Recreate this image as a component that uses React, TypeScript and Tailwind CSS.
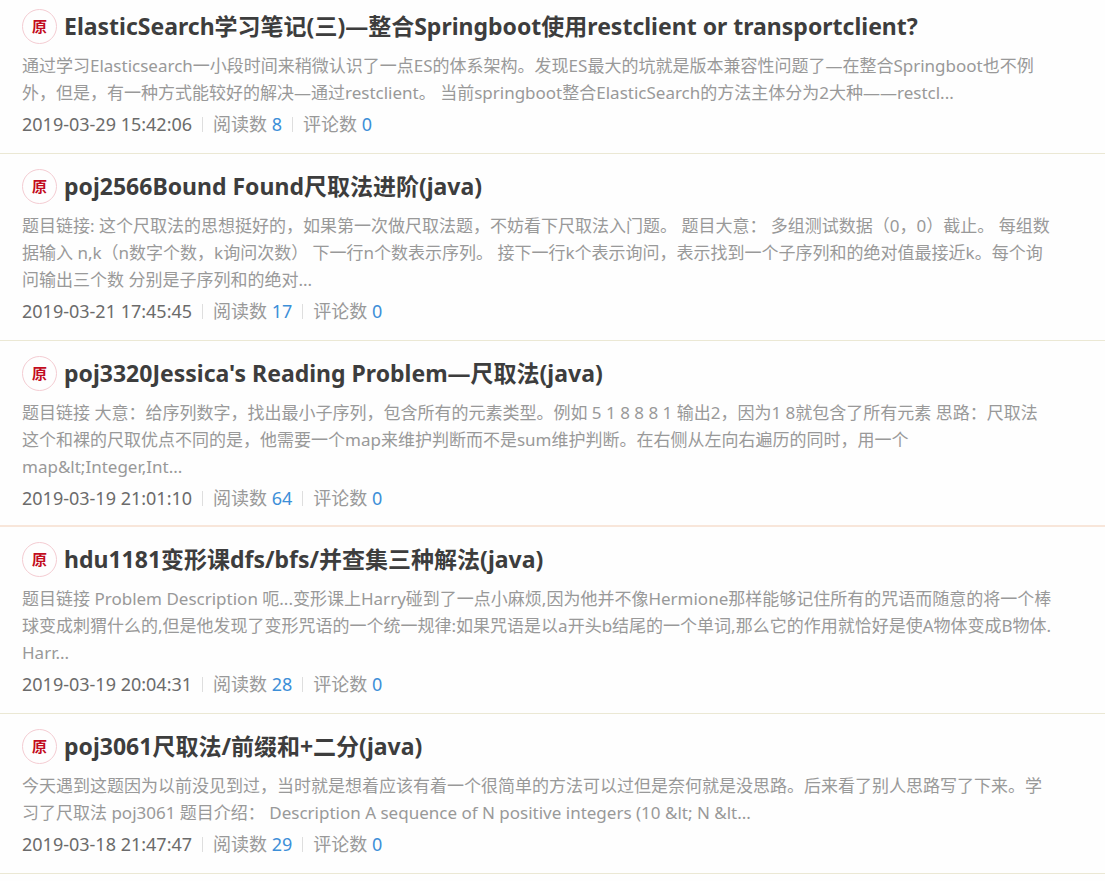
interface Article {
  id: string;
  title: string;
  summary: string;
  date: string;
  reads: number;
  comments: number;
  highlighted?: boolean;
}

const articles: Article[] = [
  {
    id: 'elasticsearch-3',
    title: 'ElasticSearch学习笔记(三)—整合Springboot使用restclient or transportclient?',
    summary:
      '通过学习Elasticsearch一小段时间来稍微认识了一点ES的体系架构。发现ES最大的坑就是版本兼容性问题了—在整合Springboot也不例\n外，但是，有一种方式能较好的解决—通过restclient。 当前springboot整合ElasticSearch的方法主体分为2大种——restcl...',
    date: '2019-03-29 15:42:06',
    reads: 8,
    comments: 0,
  },
  {
    id: 'poj2566',
    title: 'poj2566Bound Found尺取法进阶(java)',
    summary:
      '题目链接: 这个尺取法的思想挺好的，如果第一次做尺取法题，不妨看下尺取法入门题。 题目大意： 多组测试数据（0，0）截止。 每组数\n据输入 n,k（n数字个数，k询问次数） 下一行n个数表示序列。 接下一行k个表示询问，表示找到一个子序列和的绝对值最接近k。每个询\n问输出三个数 分别是子序列和的绝对...',
    date: '2019-03-21 17:45:45',
    reads: 17,
    comments: 0,
  },
  {
    id: 'poj3320',
    title: "poj3320Jessica's Reading Problem—尺取法(java)",
    summary:
      '题目链接 大意：给序列数字，找出最小子序列，包含所有的元素类型。例如 5 1 8 8 8 1 输出2，因为1 8就包含了所有元素 思路：尺取法\n这个和裸的尺取优点不同的是，他需要一个map来维护判断而不是sum维护判断。在右侧从左向右遍历的同时，用一个\nmap&lt;Integer,Int...',
    date: '2019-03-19 21:01:10',
    reads: 64,
    comments: 0,
    highlighted: true,
  },
  {
    id: 'hdu1181',
    title: 'hdu1181变形课dfs/bfs/并查集三种解法(java)',
    summary:
      '题目链接 Problem Description 呃...变形课上Harry碰到了一点小麻烦,因为他并不像Hermione那样能够记住所有的咒语而随意的将一个棒\n球变成刺猬什么的,但是他发现了变形咒语的一个统一规律:如果咒语是以a开头b结尾的一个单词,那么它的作用就恰好是使A物体变成B物体.\nHarr...',
    date: '2019-03-19 20:04:31',
    reads: 28,
    comments: 0,
  },
  {
    id: 'poj3061',
    title: 'poj3061尺取法/前缀和+二分(java)',
    summary:
      '今天遇到这题因为以前没见到过，当时就是想着应该有着一个很简单的方法可以过但是奈何就是没思路。后来看了别人思路写了下来。学\n习了尺取法 poj3061 题目介绍： Description A sequence of N positive integers (10 &lt; N &lt...',
    date: '2019-03-18 21:47:47',
    reads: 29,
    comments: 0,
  },
];

function Divider() {
  return <span className="h-[15px] w-px bg-[#dedede]" />;
}

function Count({ label, value }: { label: string; value: number }) {
  return (
    <span className="text-[#999999]">
      {label} <span className="text-[#3d8fd8]">{value}</span>
    </span>
  );
}

function ArticleItem({ article }: { article: Article }) {
  return (
    <li
      className={`px-[22px] pt-[15px] first:pt-[9px] ${
        article.highlighted
          ? 'border-b-2 border-[#f8e6da] pb-[13px]'
          : 'border-b border-[#ebe8d4] pb-[15px]'
      }`}
    >
      <a href={`#${article.id}`} className="block">
        <h2 className="mb-2 flex items-center gap-[7px] text-[23px] leading-[35px] font-bold text-[#3d3d3d]">
          <span className="flex size-[35px] shrink-0 items-center justify-center rounded-full border border-[#f4ccd2] text-[15px] leading-none text-[#c20c20]">
            原
          </span>
          {article.title}
        </h2>
        <p className="text-[17px] leading-[27px] whitespace-pre-line text-[#999999]">
          {article.summary}
        </p>
      </a>

      <div className="mt-[5px] flex items-center gap-[10px] text-[18px] leading-[27px]">
        <time className="text-[#6b6b6b]">{article.date}</time>
        <Divider />
        <Count label="阅读数" value={article.reads} />
        <Divider />
        <Count label="评论数" value={article.comments} />
      </div>
    </li>
  );
}

export default function App() {
  return (
    <main
      lang="zh-CN"
      className="min-h-screen bg-[#fefefe] font-['Noto_Sans','Noto_Sans_CJK_SC',sans-serif]"
    >
      <ul>
        {articles.map(article => (
          <ArticleItem key={article.id} article={article} />
        ))}
      </ul>
    </main>
  );
}
